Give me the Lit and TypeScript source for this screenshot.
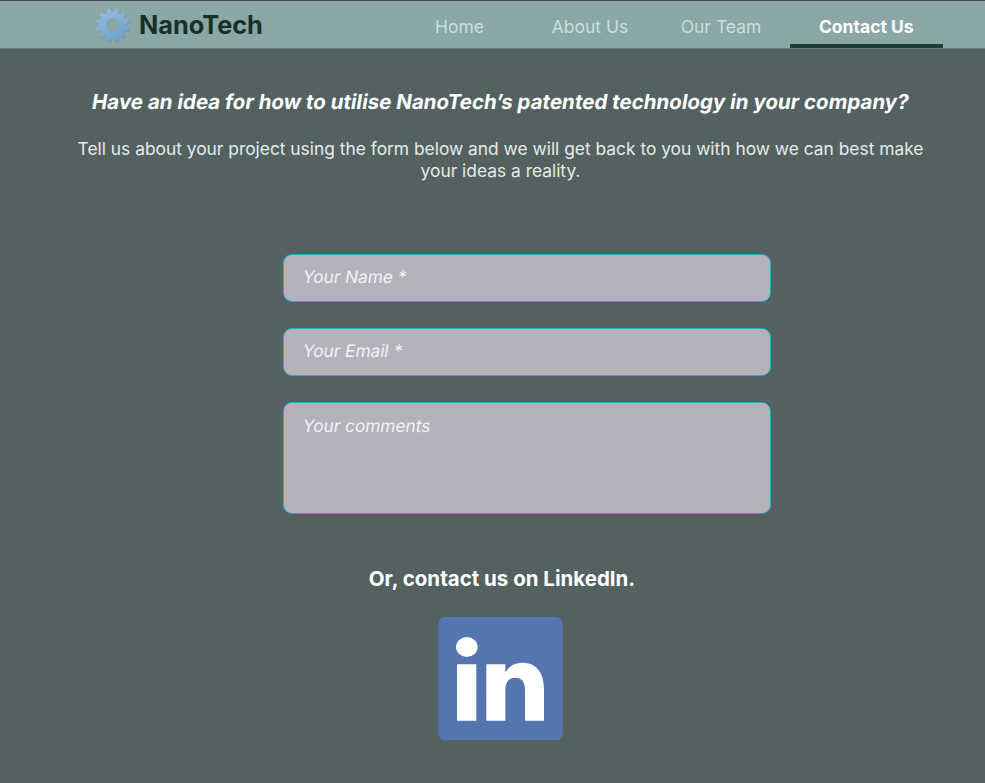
import { LitElement, html, css, svg } from "lit";
import { customElement, state } from "lit/decorators.js";
import { classMap } from "lit/directives/class-map.js";

const TEETH = 12;

function gearPath(cx: number, cy: number, outer: number, root: number, hole: number): string {
  const step = (Math.PI * 2) / TEETH;
  const pt = (r: number, a: number) =>
    `${(cx + r * Math.cos(a)).toFixed(2)} ${(cy + r * Math.sin(a)).toFixed(2)}`;
  let d = "";
  for (let i = 0; i < TEETH; i++) {
    const a = -Math.PI / 2 + step * (i + 0.5);
    d += `${i ? "L" : "M"}${pt(root, a - step * 0.31)}L${pt(outer, a - step * 0.2)}L${pt(outer, a + step * 0.2)}L${pt(root, a + step * 0.31)}`;
  }
  return `${d}ZM${cx - hole} ${cy}a${hole} ${hole} 0 1 0 ${hole * 2} 0a${hole} ${hole} 0 1 0 ${-hole * 2} 0Z`;
}

@customElement("nano-header")
class NanoHeader extends LitElement {
  @state() private active = "Contact Us";

  static styles = css`
    :host { display: block; }
    .bar {
      box-sizing: border-box;
      height: 49px;
      display: flex;
      background: #8aa6a5;
      border-top: 1px solid #4b4b4e;
      border-bottom: 1px solid #607a76;
    }
    .brand {
      box-sizing: border-box;
      width: 415px;
      padding-left: 94px;
      display: flex;
      align-items: center;
      font-weight: 700;
      font-size: 25.3px;
      color: #17302a;
    }
    .gear { width: 38px; height: 38px; margin-right: 7px; flex: none; }
    .nav { display: flex; }
    .link {
      box-sizing: border-box;
      height: 47px;
      padding-top: 15px;
      text-align: center;
      font-size: 17.5px;
      line-height: 22px;
      color: #c6dfdf;
      text-decoration: none;
      white-space: nowrap;
      width: 130px;
    }
    .home { width: 89px; margin-right: 20px; }
    .about { width: 132px; }
    .contact { width: 152.5px; margin-left: 4px; }
    .active { color: #fff; font-weight: 700; border-bottom: 4px solid #1f3d33; }
  `;

  render() {
    const links = [
      ["Home", "home"],
      ["About Us", "about"],
      ["Our Team", "team"],
      ["Contact Us", "contact"],
    ];
    return html`<header class="bar">
      <div class="brand">
        <svg class="gear" viewBox="0 0 38 38">
          <defs>
            <linearGradient id="steel" x1="0.2" y1="0" x2="0.7" y2="1">
              <stop offset="0" stop-color="#9bbcdb" />
              <stop offset="1" stop-color="#6a9fd0" />
            </linearGradient>
          </defs>
          ${svg`<path d=${gearPath(19.1, 19.8, 16.9, 13.3, 6.2)} fill="#5f7e8a" opacity="0.5" fill-rule="evenodd"/>
          <path d=${gearPath(18.7, 19.2, 16.9, 13.4, 6.3)} fill="url(#steel)" fill-rule="evenodd"/>`}
        </svg>
        <span>NanoTech</span>
      </div>
      <nav class="nav">
        ${links.map(
          ([label, cls]) => html`<a
            class=${classMap({ link: true, [cls]: true, active: this.active === label })}
            @click=${() => (this.active = label)}
            >${label}</a
          >`,
        )}
      </nav>
    </header>`;
  }
}

@customElement("contact-form")
class ContactForm extends LitElement {
  @state() private values: Record<string, string> = {};

  static styles = css`
    :host { display: block; }
    .form { display: grid; width: 488px; gap: 26px; }
    .row {
      box-sizing: border-box;
      display: grid;
      height: 48px;
      padding: 11px 19px;
      background: #b4b1bb;
      border: 1px solid #27a9cb;
      border-radius: 9px;
      font: 17.25px/22px Inter, sans-serif;
    }
    .tall { height: 112px; padding-top: 12px; }
    .hint, .input { grid-area: 1 / 1; }
    .hint {
      justify-self: start;
      height: 22px;
      color: #f3f3f6;
      transform: translateY(0.4px) skewX(-9.4deg);
      white-space: nowrap;
    }
    .input {
      min-width: 0;
      padding: 0;
      border: 0;
      margin: 0;
      background: none;
      font: inherit;
      color: #fff;
      outline: none;
      resize: none;
      z-index: 1;
    }
  `;

  private field(label: string, tall = false) {
    const onInput = (e: Event) => {
      this.values = { ...this.values, [label]: (e.target as HTMLInputElement).value };
    };
    return html`<label class=${classMap({ row: true, tall })}>
      ${this.values[label] ? null : html`<span class="hint">${label}</span>`}
      ${tall
        ? html`<textarea class="input" @input=${onInput}></textarea>`
        : html`<input class="input" @input=${onInput} />`}
    </label>`;
  }

  render() {
    return html`<form class="form">
      ${this.field("Your Name *")} ${this.field("Your Email *")} ${this.field("Your comments", true)}
    </form>`;
  }
}

@customElement("app-root")
class AppRoot extends LitElement {
  static styles = css`
    :host {
      display: block;
      height: 783px;
      overflow: hidden;
      background: #536160;
      font-family: Inter, sans-serif;
      color: #fff;
    }
    .title {
      margin: 40px 0 0 16px;
      text-align: center;
      font: 700 20.52px/26px Inter, sans-serif;
      white-space: nowrap;
      transform: skewX(-9.4deg);
    }
    .lead {
      margin: 23px 0 0 16px;
      text-align: center;
      font-size: 17.36px;
      line-height: 21.5px;
      color: #e6eaea;
      white-space: nowrap;
    }
    .form { margin: 73px 0 0 283.4px; }
    .alt {
      margin: 52px 0 0 19px;
      text-align: center;
      font: 700 20.5px/26px Inter, sans-serif;
    }
    .logo { display: block; width: 125px; height: 124px; margin: 25px 0 0 437.7px; }
  `;

  render() {
    return html`<nano-header></nano-header>
      <h1 class="title">Have an idea for how to utilise NanoTech’s patented technology in your company?</h1>
      <p class="lead">
        Tell us about your project using the form below and we will get back to you with how we can best make<br />
        your ideas a reality.
      </p>
      <contact-form class="form"></contact-form>
      <h2 class="alt">Or, contact us on LinkedIn.</h2>
      <svg class="logo" viewBox="38 36 375 372">
        <rect x="39" y="36" width="373" height="370" rx="20" fill="#5475b0" />
        <ellipse cx="124.500" cy="126" rx="32.500" ry="30" fill="#fff" />
        <path d="M95 178h58v169h-58zM183 178h57v24C251 184 268 173 291 173C333 173 356 203 356 251V347H299V256C299 232 290 218 270 218C250 218 240 232 240 256V347H183z" fill="#fff" />
      </svg>`;
  }
}
